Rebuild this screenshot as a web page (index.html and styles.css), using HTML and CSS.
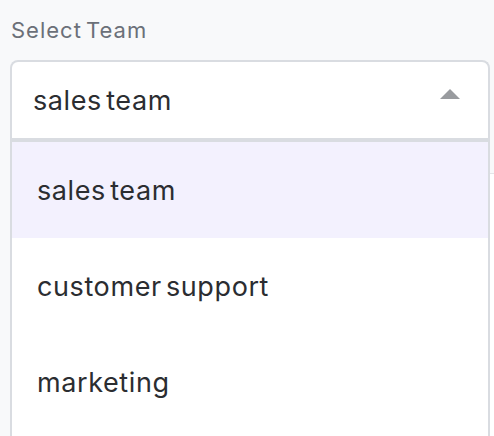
FILE: index.html
```html
<!DOCTYPE html>
<html lang="en">
<head>
	<meta charset="UTF-8">
	<meta name="viewport" content="width=device-width, initial-scale=1.0">
	<title>Select Team</title>
	<link rel="stylesheet" href="styles.css">
</head>
<body>
	<div class="field">
		<label class="field-label">Select Team</label>
		<div class="select">
			<div class="select-value">
				<span>sales team</span>
				<svg class="caret" width="20" height="10" viewBox="0 0 20 10">
					<polygon points="0,10 10,0 20,10" fill="#999b9f"/>
				</svg>
			</div>
			<ul class="options">
				<li class="option selected">sales team</li>
				<li class="option">customer support</li>
				<li class="option">marketing</li>
			</ul>
		</div>
		<div class="card"></div>
	</div>
</body>
</html>
```

FILE: styles.css
```css
* {
	box-sizing: border-box;
	padding: 0;
	margin: 0;
}

body {
	font-family: 'Inter', sans-serif;
	background: #f8f9fa;
	color: #2b2d31;
	overflow: hidden;
}

.field {
	padding: 16px 4px 0 10px;
}

.field-label {
	display: block;
	font-size: 22px;
	line-height: 28px;
	letter-spacing: 1px;
	word-spacing: -3px;
	color: #6b7078;
	margin-bottom: 16px;
	padding-left: 1px;
}

.select {
	position: relative;
	width: 480px;
	background: #fff;
	border: 2px solid #d9dce1;
	border-bottom: none;
	border-radius: 8px 8px 0 0;
	z-index: 2;
}

.select-value {
	display: flex;
	align-items: center;
	justify-content: space-between;
	height: 80px;
	padding: 0 28px 0 21px;
	border-bottom: 4px solid #d9dce1;
	font-size: 27px;
	letter-spacing: 0.6px;
	word-spacing: -4px;
}

.caret {
	margin-top: -12px;
}

.options {
	position: absolute;
	top: 100%;
	left: -2px;
	right: -2px;
	list-style: none;
	background: #fff;
	border: 2px solid #d9dce1;
	border-top: none;
	padding-bottom: 40px;
}

.option {
	height: 96px;
	display: flex;
	align-items: center;
	padding-left: 25px;
	font-size: 27px;
	letter-spacing: 0.6px;
	word-spacing: -4px;
}

.option.selected {
	background: #f3f1fe;
}

.card {
	height: 400px;
	margin: 31px -4px 0 200px;
	background: #fff;
	border-top: 1px solid #e3e5e8;
}
```
